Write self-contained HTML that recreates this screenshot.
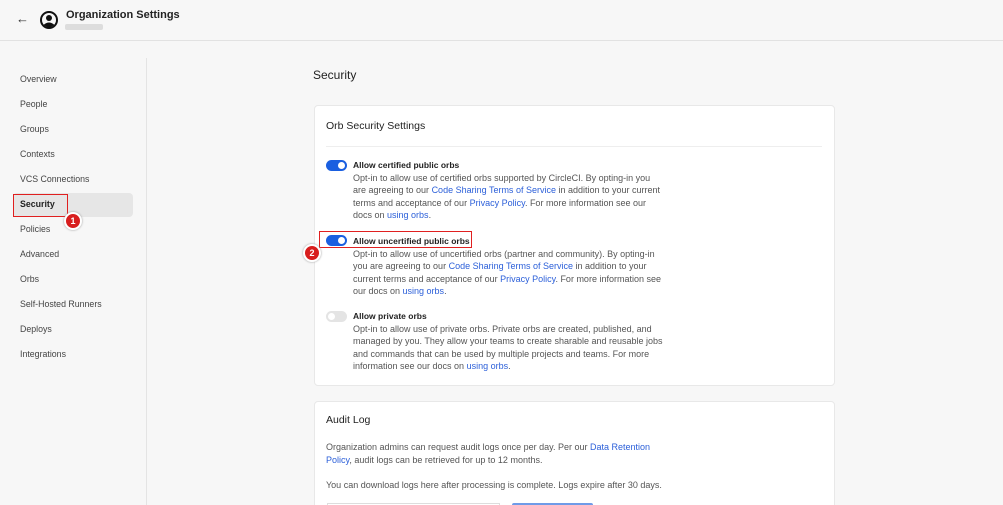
<!DOCTYPE html><html><head><style>
*{margin:0;padding:0;box-sizing:border-box}
html,body{width:1003px;height:505px;overflow:hidden}
body{background:#f7f7f7;font-family:"Liberation Sans",sans-serif;color:#333;position:relative}
.a{position:absolute}
.nav{left:20px;font-size:8.8px;color:#444}
.card{background:#fff;border:1px solid #e8e8e8;border-radius:4px}
.t{font-size:9px;line-height:12.5px;color:#555}
.t b{color:#222;font-weight:bold;display:block;font-size:8.5px}
a{color:#2b5fd9;text-decoration:none}
.tg{width:21px;height:11px;border-radius:6px;background:#1a5fe0}
.tg::after{content:"";position:absolute;right:2px;top:2px;width:7px;height:7px;border-radius:50%;background:#fff}
.off{background:#e4e4e4}.off::after{left:2px;right:auto}
.badge{width:18px;height:18px;border-radius:50%;background:#d81e1e;border:2px solid #fff;box-shadow:0 0 2px #999;color:#fff;font-size:9px;font-weight:bold;text-align:center;line-height:14px}
</style></head><body>
<div class="a" style="left:0;top:0;width:1003px;height:41px;border-bottom:1px solid #e2e2e2"></div>
<div class="a" style="left:16px;top:11px;font-size:13px">←</div>
<svg class="a" style="left:40px;top:11px" width="18" height="18" viewBox="0 0 18 18"><circle cx="9" cy="9" r="8" fill="none" stroke="#111" stroke-width="2"/><circle cx="9" cy="7" r="3" fill="#111"/><path d="M3.5 14 Q9 9 14.5 14 L9 17Z" fill="#111"/></svg>
<div class="a" style="left:66px;top:9px;font-size:11px;font-weight:bold;color:#222">Organization Settings</div>
<div class="a" style="left:65px;top:24px;width:38px;height:6px;background:#ddd;border-radius:2px"></div>
<div class="a" style="left:146px;top:58px;width:1px;height:447px;background:#e4e4e4"></div>
<div class="a" style="left:13px;top:193px;width:120px;height:24px;background:#e6e6e6;border-radius:4px"></div>
<div class="a" style="left:13px;top:194px;width:55px;height:23px;border:1.5px solid #e02020"></div>
<div class="a badge" style="left:64px;top:212px">1</div>
<div class="a nav" style="top:74px">Overview</div>
<div class="a nav" style="top:99px">People</div>
<div class="a nav" style="top:124px">Groups</div>
<div class="a nav" style="top:149px">Contexts</div>
<div class="a nav" style="top:174px">VCS Connections</div>
<div class="a nav" style="top:199px;color:#222;font-weight:bold">Security</div>
<div class="a nav" style="top:224px">Policies</div>
<div class="a nav" style="top:249px">Advanced</div>
<div class="a nav" style="top:274px">Orbs</div>
<div class="a nav" style="top:299px">Self-Hosted Runners</div>
<div class="a nav" style="top:324px">Deploys</div>
<div class="a nav" style="top:349px">Integrations</div>
<div class="a" style="left:313px;top:68px;font-size:12px;color:#222">Security</div>
<div class="a card" style="left:314px;top:105px;width:521px;height:281px"></div>
<div class="a" style="left:326px;top:120px;font-size:10.5px;color:#222">Orb Security Settings</div>
<div class="a" style="left:326px;top:146px;width:496px;height:1px;background:#eee"></div>
<div class="a tg" style="left:326px;top:160px"></div>
<div class="a t" style="left:353px;top:159px;width:312px"><b>Allow certified public orbs</b>Opt-in to allow use of certified orbs supported by CircleCI. By opting-in you are agreeing to our <a>Code Sharing Terms of Service</a> in addition to your current terms and acceptance of our <a>Privacy Policy</a>. For more information see our docs on <a>using orbs</a>.</div>
<div class="a" style="left:319px;top:231px;width:153px;height:17px;border:1.5px solid #e02020"></div>
<div class="a badge" style="left:303px;top:244px">2</div>
<div class="a tg" style="left:326px;top:235px"></div>
<div class="a t" style="left:353px;top:235px;width:312px"><b>Allow uncertified public orbs</b>Opt-in to allow use of uncertified orbs (partner and community). By opting-in you are agreeing to our <a>Code Sharing Terms of Service</a> in addition to your current terms and acceptance of our <a>Privacy Policy</a>. For more information see our docs on <a>using orbs</a>.</div>
<div class="a tg off" style="left:326px;top:311px"></div>
<div class="a t" style="left:353px;top:310px;width:312px"><b>Allow private orbs</b>Opt-in to allow use of private orbs. Private orbs are created, published, and managed by you. They allow your teams to create sharable and reusable jobs and commands that can be used by multiple projects and teams. For more information see our docs on <a>using orbs</a>.</div>
<div class="a card" style="left:314px;top:401px;width:521px;height:110px"></div>
<div class="a" style="left:326px;top:414px;font-size:10.5px;color:#222">Audit Log</div>
<div class="a t" style="left:326px;top:441px;width:330px">Organization admins can request audit logs once per day. Per our <a>Data Retention Policy</a>, audit logs can be retrieved for up to 12 months.</div>
<div class="a t" style="left:326px;top:479px;width:400px">You can download logs here after processing is complete. Logs expire after 30 days.</div>
<div class="a" style="left:327px;top:503px;width:173px;height:4px;border:1px solid #ddd;border-bottom:none"></div>
<div class="a" style="left:512px;top:503px;width:81px;height:4px;background:#6f9be8;border-radius:2px 2px 0 0"></div>
</body></html>
